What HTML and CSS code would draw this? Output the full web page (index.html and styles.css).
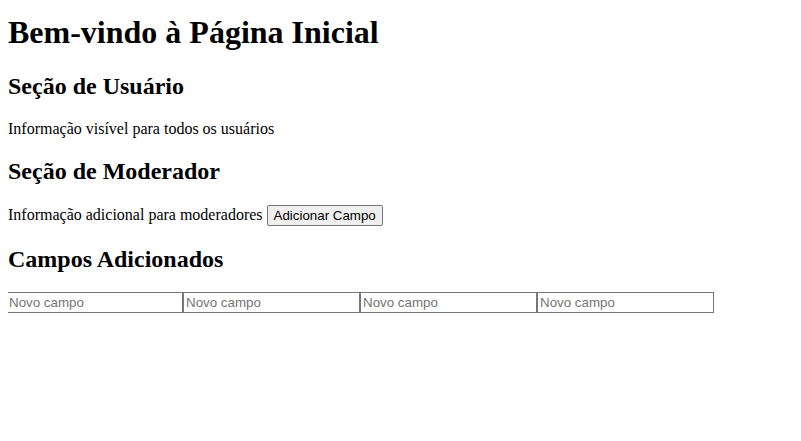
FILE: index.html
```html
<!DOCTYPE html>
<html lang="pt">
<head>
<meta charset="utf-8">
<title>Página Inicial</title>
<link rel="stylesheet" href="styles.css">
</head>
<body class="page">
<h1 class="title">Bem-vindo à Página Inicial</h1>
<h2 class="section-title">Seção de Usuário</h2>
<p class="text">Informação visível para todos os usuários</p>
<h2 class="section-title">Seção de Moderador</h2>
<p class="text">Informação adicional para moderadores <button class="btn">Adicionar Campo</button></p>
<h2 class="section-title">Campos Adicionados</h2>
<div class="fields"><input class="field" placeholder="Novo campo"><input class="field" placeholder="Novo campo"><input class="field" placeholder="Novo campo"><input class="field" placeholder="Novo campo"></div>
</body>
</html>
```
FILE: styles.css
```css
.page {
  margin: 0 8px 8px 8px;
  padding-top: 0.1px;
  font-family: "Liberation Serif", "Times New Roman", serif;
  font-size: 16px;
  color: #000;
  background: #fff;
}
.title {
  font-size: 32px;
  font-weight: bold;
  margin: 14.4px 0 21.44px;
}
.section-title {
  font-size: 24px;
  font-weight: bold;
  margin: 19.92px 0;
}
.text {
  margin: 16px 0;
}
.btn {
  font-family: "Liberation Sans", Arial, sans-serif;
  font-size: 13.333px;
  padding: 2px 6px;
  border: 1px solid #767676;
  border-radius: 2px;
  background: #efefef;
  color: #000;
}
.fields {
  display: flex;
  margin: 1px 0 0 -2px;
}
.field {
  font-family: "Liberation Sans", Arial, sans-serif;
  font-size: 13.333px;
  width: 177px;
  height: 21px;
  box-sizing: border-box;
  padding: 1px 2px;
  border: 1px solid #767676;
  margin: 0;
}
.field::placeholder {
  color: #757575;
}
```
